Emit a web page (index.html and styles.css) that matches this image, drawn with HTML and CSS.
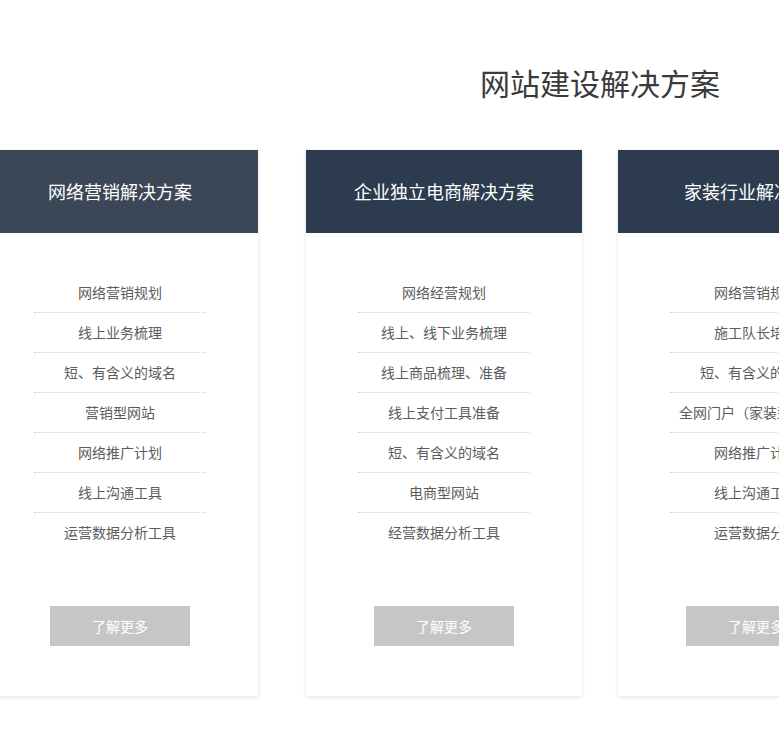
FILE: index.html
```html
<!DOCTYPE html>
<html lang="zh-CN">
<head>
<meta charset="utf-8">
<title>网站建设解决方案</title>
<link rel="stylesheet" href="styles.css">
</head>
<body>
<div class="page">
  <h2 class="title">网站建设解决方案</h2>
  <div class="cards">
    <div class="card card-first">
      <div class="card-head">网络营销解决方案</div>
      <ul class="card-list">
        <li>网络营销规划</li>
        <li>线上业务梳理</li>
        <li>短、有含义的域名</li>
        <li>营销型网站</li>
        <li>网络推广计划</li>
        <li>线上沟通工具</li>
        <li>运营数据分析工具</li>
      </ul>
      <a class="more">了解更多</a>
    </div>
    <div class="card card-second">
      <div class="card-head">企业独立电商解决方案</div>
      <ul class="card-list">
        <li>网络经营规划</li>
        <li>线上、线下业务梳理</li>
        <li>线上商品梳理、准备</li>
        <li>线上支付工具准备</li>
        <li>短、有含义的域名</li>
        <li>电商型网站</li>
        <li>经营数据分析工具</li>
      </ul>
      <a class="more">了解更多</a>
    </div>
    <div class="card">
      <div class="card-head">家装行业解决方案</div>
      <ul class="card-list">
        <li>网络营销规划</li>
        <li>施工队长培训</li>
        <li>短、有含义的域名</li>
        <li>全网门户（家装型网站）</li>
        <li>网络推广计划</li>
        <li>线上沟通工具</li>
        <li>运营数据分析</li>
      </ul>
      <a class="more">了解更多</a>
    </div>
  </div>
</div>
</body>
</html>
```

FILE: styles.css
```css
html {
  overflow: hidden;
  background: #fff;
}

body {
  margin: 0;
  padding: 0;
  font-family: "Noto Sans CJK SC", "Noto Sans", sans-serif;
}

.page {
  width: 1200px;
  padding-bottom: 60px;
}

.title {
  margin: 0;
  padding-top: 62px;
  height: 40px;
  line-height: 40px;
  font-size: 30px;
  font-weight: 400;
  color: #3a3a3a;
  text-align: center;
}

.cards {
  display: flex;
  margin-top: 48px;
  margin-left: -18px;
}

.card {
  width: 276px;
  flex: none;
  background: #fff;
  box-shadow: 0 1px 4px rgba(0, 0, 0, 0.13);
  display: flex;
  flex-direction: column;
  align-items: center;
  padding-bottom: 50px;
}

.card-first {
  margin-right: 48px;
}

.card-second {
  margin-right: 36px;
}

.card-head {
  align-self: stretch;
  height: 83px;
  line-height: 83px;
  background: #2c3b4e;
  color: #fff;
  font-size: 18px;
  text-align: center;
}

.card-first .card-head {
  background: #3b4757;
}

.card-list {
  list-style: none;
  margin: 0;
  padding: 40px 0 0;
  width: 172px;
}

.card-list li {
  height: 39px;
  line-height: 39px;
  border-bottom: 1px dotted #d2d2d2;
  font-size: 14px;
  color: #5c5c5c;
  text-align: center;
  white-space: nowrap;
}

.card-list li:last-child {
  border-bottom-color: transparent;
}

.more {
  display: block;
  margin-top: 53px;
  width: 140px;
  height: 40px;
  line-height: 40px;
  background: #c6c6c6;
  color: #fff;
  font-size: 14px;
  text-align: center;
}
```
